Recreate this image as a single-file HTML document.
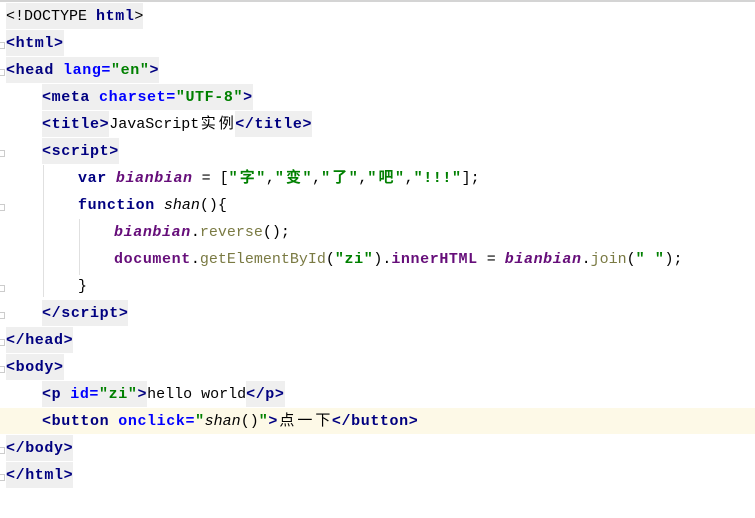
<!DOCTYPE html>
<html><head><meta charset="utf-8"><style>
body{margin:0;width:755px;height:518px;background:#fff;overflow:hidden;position:relative;font-family:"Liberation Mono","Noto Sans CJK SC",monospace;font-size:15px;}
.top{position:absolute;left:0;top:0;width:755px;height:2px;background:#d4d4d4}
.l{position:absolute;left:6px;height:26px;line-height:28px;white-space:pre;color:#000}
.g{background:#efefef;display:inline-block;height:26px;vertical-align:top}
.t{color:#000080;font-weight:bold;letter-spacing:0.6px}
.a{color:#0000ff;font-weight:bold;letter-spacing:0.6px}
.s{color:#008000;font-weight:bold;letter-spacing:0.6px}
.p{color:#660e7a;font-weight:bold;font-style:italic;letter-spacing:0.6px}
.f{color:#7a7a43}
.i{font-style:italic}
.c{display:inline-block;width:18px;text-align:center;letter-spacing:0}
.hl{position:absolute;left:0;top:408px;width:755px;height:26px;background:#fdf9e7}
.guide{position:absolute;width:1px;background:#e0e0e0}
.fold{position:absolute;left:0;width:5px;height:7px;border:1px solid #ccc;border-left:none;box-sizing:border-box}
</style></head><body>
<div class="top"></div>
<div class="hl"></div>
<div class="guide" style="left:43px;top:165px;height:132px"></div>
<div class="guide" style="left:79px;top:219px;height:56px"></div>
<div class="fold" style="top:42px"></div>
<div class="fold" style="top:69px"></div>
<div class="fold" style="top:150px"></div>
<div class="fold" style="top:204px"></div>
<div class="fold" style="top:285px"></div>
<div class="fold" style="top:312px"></div>
<div class="fold" style="top:339px"></div>
<div class="fold" style="top:366px"></div>
<div class="fold" style="top:447px"></div>
<div class="fold" style="top:474px"></div>

<div class="l" style="top:3px"><span class="g">&lt;!DOCTYPE <span class="t">html</span>&gt;</span></div>
<div class="l" style="top:30px"><span class="g"><span class="t">&lt;html&gt;</span></span></div>
<div class="l" style="top:57px"><span class="g"><span class="t">&lt;head</span> <span class="a">lang=</span><span class="s">"en"</span><span class="t">&gt;</span></span></div>
<div class="l" style="top:84px">    <span class="g"><span class="t">&lt;meta</span> <span class="a">charset=</span><span class="s">"UTF-8"</span><span class="t">&gt;</span></span></div>
<div class="l" style="top:111px">    <span class="g"><span class="t">&lt;title&gt;</span></span>JavaScript<span class="c">实</span><span class="c">例</span><span class="g"><span class="t">&lt;/title&gt;</span></span></div>
<div class="l" style="top:138px">    <span class="g"><span class="t">&lt;script&gt;</span></span></div>
<div class="l" style="top:165px">        <span class="t">var</span> <span class="p">bianbian</span> = [<span class="s">"<span class="c">字</span>"</span>,<span class="s">"<span class="c">变</span>"</span>,<span class="s">"<span class="c">了</span>"</span>,<span class="s">"<span class="c">吧</span>"</span>,<span class="s">"!!!"</span>];</div>
<div class="l" style="top:192px">        <span class="t">function</span> <span class="i">shan</span>(){</div>
<div class="l" style="top:219px">            <span class="p">bianbian</span>.<span class="f">reverse</span>();</div>
<div class="l" style="top:246px">            <span class="t" style="color:#660e7a">document</span>.<span class="f">getElementById</span>(<span class="s">"zi"</span>).<span class="t" style="color:#660e7a">innerHTML</span> = <span class="p">bianbian</span>.<span class="f">join</span>(<span class="s">" "</span>);</div>
<div class="l" style="top:273px">        }</div>
<div class="l" style="top:300px">    <span class="g"><span class="t">&lt;/script&gt;</span></span></div>
<div class="l" style="top:327px"><span class="g"><span class="t">&lt;/head&gt;</span></span></div>
<div class="l" style="top:354px"><span class="g"><span class="t">&lt;body&gt;</span></span></div>
<div class="l" style="top:381px">    <span class="g"><span class="t">&lt;p</span> <span class="a">id=</span><span class="s">"zi"</span><span class="t">&gt;</span></span>hello world<span class="g"><span class="t">&lt;/p&gt;</span></span></div>
<div class="l" style="top:408px">    <span class="t">&lt;button</span> <span class="a">onclick=</span><span class="s">"</span><span class="i">shan</span>()<span class="s">"</span><span class="t">&gt;</span><span class="c">点</span><span class="c">一</span><span class="c">下</span><span class="t">&lt;/button&gt;</span></div>
<div class="l" style="top:435px"><span class="g"><span class="t">&lt;/body&gt;</span></span></div>
<div class="l" style="top:462px"><span class="g"><span class="t">&lt;/html&gt;</span></span></div>
</body></html>
